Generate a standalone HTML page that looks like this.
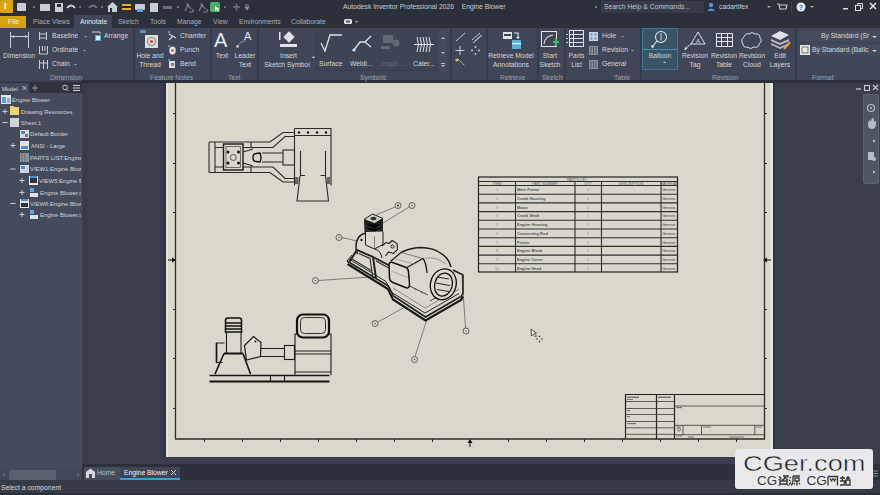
<!DOCTYPE html>
<html><head><meta charset="utf-8">
<style>
*{margin:0;padding:0;box-sizing:border-box}
html,body{width:880px;height:495px;overflow:hidden;background:#3a3e4c;font-family:"Liberation Sans",sans-serif;}
.a{position:absolute}
.t{position:absolute;white-space:nowrap;color:#d3d6dc;font-size:6.8px;line-height:8px}
.c{text-align:center}
svg{position:absolute;overflow:visible}
#title{left:0;top:0;width:880px;height:14px;background:#2b2f3a}
#tabs{left:0;top:14px;width:880px;height:14px;background:#2c303b}
#ribbon{left:0;top:27.5px;width:880px;height:53px;background:#404657}
#browser{left:0;top:82px;width:82px;height:398px;background:#454b5a}
#canvas{left:82px;top:81px;width:798px;height:383px;background:#3a3e4c}
#sheet{left:166px;top:83px;width:607px;height:374px;background:#dad7cc}
#doctabs{left:82px;top:464px;width:798px;height:16px;background:#2c303b}
#status{left:0;top:480px;width:880px;height:15px;background:#363b46;border-bottom:2px solid #2a2e38}
.sep{position:absolute;top:28px;width:1.5px;height:53px;background:#363b49}
.pl{position:absolute;top:73.7px;color:#9aa0ab;font-size:6.8px;line-height:8px;white-space:nowrap}
</style></head><body>
<div id="title" class="a"></div>
<div id="tabs" class="a"></div>
<div id="ribbon" class="a"></div>
<div id="canvas" class="a"></div>
<div id="browser" class="a"></div>
<div id="sheet" class="a"></div>
<div id="doctabs" class="a"></div>
<div id="status" class="a"></div>

<!-- TITLEBAR -->
<div class="a" style="left:0;top:0;width:13px;height:13px;background:#d9a50c;border-radius:1px"></div>
<div class="t" style="left:4px;top:2px;font-size:9px;color:#fff;font-weight:bold">I</div>
<svg style="left:0;top:0" width="880" height="14">
 <g fill="#c9ccd2">
  <rect x="17" y="3" width="9" height="8" rx="1"/>
  <rect x="40" y="4" width="10" height="7"/>
  <rect x="55" y="3" width="8" height="9"/>
  <rect x="108" y="6" width="9" height="6"/><polygon points="107,7 112.5,2 118,7"/>
  <rect x="135" y="4" width="10" height="6" rx="1"/>
  <rect x="150" y="3" width="8" height="9"/>
 </g>
 <g fill="#2a2e38"><rect x="57" y="4" width="4" height="3"/><rect x="110" y="8" width="2" height="4"/></g>
 <path d="M67 8 q4 -5 8 0" stroke="#c9ccd2" stroke-width="2" fill="none"/>
 <path d="M89 8 q4 -5 8 0" stroke="#6a6f7a" stroke-width="2" fill="none"/>
 <rect x="122" y="4" width="9" height="2" fill="#e1b12a"/><rect x="122" y="8" width="9" height="2" fill="#e1b12a"/><rect x="123" y="6" width="7" height="2" fill="#222"/>
 <rect x="137" y="9" width="6" height="3" fill="#5aa0dc"/>
 <rect x="163" y="6" width="9" height="3" fill="#6a6f7a"/>
 <g stroke="#7c818b" stroke-width="1.2" fill="none"><path d="M185 11l3 -6l3 4M186 4h3M193 9v3h-4"/><path d="M199 11l3 -6l3 4M200 4h3M207 9v3h-4"/></g>
 <rect x="210" y="2" width="10" height="10" rx="2" fill="#4cae6a"/><path d="M215 6l0 5l1.5 -1.5l1.5 2l1 -0.5l-1.5 -2l2 0z" fill="#fff"/>
 <g fill="#8b909a"><circle cx="34" cy="7" r="0.9"/><circle cx="80" cy="7" r="0.9"/><circle cx="102" cy="7" r="0.9"/><circle cx="178" cy="7" r="0.9"/><circle cx="225" cy="7" r="0.9"/></g>
 <path d="M233 7h7M236.5 3.5v7" stroke="#6a6f7a" stroke-width="1.5"/>
 <path d="M245 5h4M245 7h4l-2 3z" stroke="#8b909a" stroke-width="1" fill="#8b909a"/>
</svg>
<div class="t" style="left:343px;top:3px;color:#c9ccd3">Autodesk Inventor Professional 2026&nbsp;&nbsp;&nbsp;&nbsp;Engine Blower</div>
<div class="a" style="left:601px;top:1px;width:103px;height:12px;background:#363b47;border-radius:1px"></div>
<div class="t" style="left:604px;top:3px;color:#bfc3ca">Search Help &amp; Commands...</div>
<svg style="left:0;top:0" width="880" height="14">
 <circle cx="596" cy="7" r="0.9" fill="#aaa"/>
 <circle cx="711" cy="5" r="2.2" fill="#5d8fd6"/><path d="M707 11 q4 -5 8 0z" fill="#5d8fd6"/>
 <path d="M767 6h4l-2 2z" fill="#aaa"/>
 <path d="M777 4h2l1 5h6l1 -4h-7" stroke="#c9ccd2" stroke-width="1.2" fill="none"/>
 <rect x="791" y="2" width="1" height="10" fill="#444955"/>
 <circle cx="801" cy="7" r="4.5" fill="#e8eaf0"/><text x="801" y="9.6" text-anchor="middle" font-family="Liberation Sans" font-weight="bold" font-size="7" fill="#2f5fa8">?</text>
 <path d="M810 6h4l-2 2z" fill="#aaa"/>
 <rect x="843" y="8" width="5" height="1.5" fill="#ddd"/>
 <rect x="855.5" y="5.5" width="5" height="5" fill="none" stroke="#ddd" stroke-width="1"/><path d="M857.5 5.5v-2h5v5h-2" fill="none" stroke="#ddd" stroke-width="1"/>
 <path d="M870 3l6 6M876 3l-6 6" stroke="#eee" stroke-width="1.4"/>
</svg>
<div class="t" style="left:719px;top:3px;color:#c9ccd3">cadartifex</div>

<!-- TABS -->
<div class="a" style="left:0;top:16px;width:26px;height:12px;background:#d5a310"></div>
<div class="t" style="left:8px;top:18px;color:#f5efd6">File</div>
<div class="a" style="left:74px;top:15px;width:38px;height:13px;background:#404657"></div>
<div class="t" style="left:33px;top:18px;color:#a9aeb7">Place Views</div>
<div class="t" style="left:80px;top:18px;color:#e6e8ec">Annotate</div>
<div class="t" style="left:118px;top:18px;color:#a9aeb7">Sketch</div>
<div class="t" style="left:150px;top:18px;color:#a9aeb7">Tools</div>
<div class="t" style="left:177px;top:18px;color:#a9aeb7">Manage</div>
<div class="t" style="left:213px;top:18px;color:#a9aeb7">View</div>
<div class="t" style="left:239px;top:18px;color:#a9aeb7">Environments</div>
<div class="t" style="left:291px;top:18px;color:#a9aeb7">Collaborate</div>
<svg style="left:0;top:0" width="880" height="30">
 <rect x="344" y="19" width="8" height="5" rx="1.5" fill="#dfe2e7"/><rect x="346" y="20.5" width="4" height="2" fill="#555"/>
 <path d="M355 21h3l-1.5 2z" fill="#aaa"/>
</svg>
<!-- RIBBON -->
<div class="sep" style="left:133px"></div>
<div class="sep" style="left:210px"></div>
<div class="sep" style="left:257px"></div>
<div class="sep" style="left:450px"></div>
<div class="sep" style="left:486px"></div>
<div class="sep" style="left:537px"></div>
<div class="sep" style="left:564px"></div>
<div class="sep" style="left:640px"></div>
<div class="sep" style="left:795px"></div>
<div class="a" style="left:82px;top:80px;width:798px;height:3px;background:#2b2f3a"></div>
<!-- Dimension panel -->
<svg style="left:0;top:0" width="880" height="82">
 <g stroke="#c8ccd3" stroke-width="1" fill="none">
  <path d="M10.5 32v16M28.5 32v16M11 36.5h17"/>
  <path d="M39.5 32v8M46.5 32v8M40 34h6M40 38h6"/>
  <path d="M39.5 46v8h8v-8M42.5 46v5M45 46v5"/>
  <path d="M39.5 60v9M43.5 60v9M47.5 60v9M40 63h7"/>
 </g>
 <path d="M11 36.5l3 -1.5v3zM28 36.5l-3 -1.5v3z" fill="#c8ccd3"/>
 <path d="M92 32h8v2" stroke="#c8ccd3" fill="none"/><rect x="95" y="35" width="6" height="6" fill="#58a9d6"/><rect x="96" y="36" width="4" height="4" fill="#dfe9ee"/>
 <g fill="#9ca1ab"><path d="M84 36h3l-1.5 1.5z"/><path d="M83 50h3l-1.5 1.5z"/><path d="M74 64h3l-1.5 1.5z"/></g>
</svg>
<div class="t" style="left:3px;top:52px">Dimension</div>
<div class="t" style="left:52px;top:32px">Baseline</div>
<div class="t" style="left:104px;top:32px">Arrange</div>
<div class="t" style="left:52px;top:46px">Ordinate</div>
<div class="t" style="left:52px;top:60px">Chain</div>
<div class="pl" style="left:50px">Dimension</div>
<!-- Feature notes -->
<svg style="left:0;top:0" width="880" height="82">
 <rect x="145" y="35" width="13" height="13" fill="#d9dcd8"/>
 <circle cx="151.5" cy="41.5" r="4" fill="none" stroke="#8a8f96" stroke-width="1.2"/><circle cx="151.5" cy="41.5" r="1.6" fill="#c94a3a"/>
 <rect x="140" y="30" width="6" height="3" fill="#5a8fc4"/>
 <path d="M169 34l7 4M169 40l4 -4" stroke="#d0d3d9" stroke-width="1.2"/>
 <ellipse cx="172.5" cy="50.5" rx="3.2" ry="4" fill="#e6e8ea"/><circle cx="172.5" cy="50.5" r="1.3" fill="#c94a3a"/>
 <path d="M169 61h6v7h-6z" fill="#d9dcd8"/><path d="M171 63h3v3h-3z" fill="#888"/>
 <g fill="#5a8fc4"><rect x="168" y="31" width="2" height="2"/><rect x="168" y="45" width="2" height="2"/><rect x="168" y="59" width="2" height="2"/></g>
</svg>
<div class="t c" style="left:131px;top:52px;width:38px">Hole and</div>
<div class="t c" style="left:131px;top:61.3px;width:38px">Thread</div>
<div class="t" style="left:180px;top:32px">Chamfer</div>
<div class="t" style="left:180px;top:46px">Punch</div>
<div class="t" style="left:180px;top:60px">Bend</div>
<div class="pl" style="left:150px">Feature Notes</div>
<!-- Text -->
<div class="t" style="left:214px;top:30px;font-size:20px;line-height:20px;color:#e4e6ea">A</div>
<div class="t" style="left:244px;top:31px;font-size:11px;line-height:11px;color:#e4e6ea">A</div>
<svg style="left:0;top:0" width="880" height="82">
 <path d="M238 46q3 -5 7 -5" stroke="#d0d3d9" fill="none" stroke-dasharray="1.5 1"/><circle cx="237.5" cy="46.5" r="1.3" fill="#d0d3d9"/>
</svg>
<div class="t c" style="left:208px;top:52px;width:28px">Text</div>
<div class="t c" style="left:231px;top:52px;width:28px">Leader</div>
<div class="t c" style="left:231px;top:61.3px;width:28px">Text</div>
<div class="pl" style="left:228px">Text</div>
<!-- Symbols -->
<div class="a" style="left:316px;top:30px;width:131px;height:41px;background:#3e4454;border:1px solid #383d4b"></div>
<div class="a" style="left:439px;top:30px;width:8px;height:41px;background:#454b5b"></div>
<svg style="left:0;top:0" width="880" height="82">
 <rect x="279" y="32" width="1.5" height="8" fill="#e0e2e6"/>
 <rect x="285" y="33" width="8" height="8" transform="rotate(45 289 37)" fill="#e0e2e6"/>
 <rect x="280" y="44" width="17" height="3" fill="#e0e2e6"/>
 <path d="M321 43l4 8l5 -16h12" stroke="#dfe2e6" stroke-width="1.3" fill="none"/>
 <path d="M354 50l6 -8h5l6 -6M365 42l6 5" stroke="#dfe2e6" stroke-width="1.3" fill="none"/><circle cx="354" cy="50" r="1.6" fill="#dfe2e6"/>
 <g fill="#626874"><rect x="383" y="35" width="10" height="8"/><circle cx="396" cy="43" r="3.5"/><rect x="381" y="46" width="9" height="3"/></g>
 <g stroke="#e0e2e6" stroke-width="1" fill="none"><path d="M417 37q3 7 0 15M420 37q3 7 0 15M423 37q3 7 0 15M426 37q3 7 0 15M429 37q3 7 0 15M414 44.5h20"/></g>
 <g fill="#b8bcc4"><path d="M441 39h4l-2 -2z"/><path d="M441 52h4l-2 2z"/><path d="M441 65h4l-2 2zM441 63h4v1h-4z"/></g>
 <path d="M312 58h3l-1.5 -2z" fill="#ccc"/>
</svg>
<div class="t c" style="left:270px;top:52px;width:37px">Insert</div>
<div class="t c" style="left:262px;top:61.3px;width:50px">Sketch Symbol</div>
<div class="t" style="left:319px;top:59.5px">Surface</div>
<div class="t" style="left:350px;top:59.5px">Weldi...</div>
<div class="t" style="left:381px;top:59.5px;color:#646a75">Impor...</div>
<div class="t" style="left:413px;top:59.5px">Cater...</div>
<div class="pl" style="left:360px">Symbols</div>
<!-- small icons -->
<svg style="left:0;top:0" width="880" height="82">
 <g stroke="#c8ccd3" stroke-width="1" fill="none">
  <path d="M456 41l9 -8"/><path d="M472 40l8 -7M475 41l7 -6M473 43l9 -8"/>
  <path d="M460 46v9M455.5 50.5h9"/>
  <path d="M458 59l7 7" stroke-dasharray="1.5 1"/>
 </g>
 <g fill="#c8ccd3"><circle cx="475.5" cy="47" r="1"/><circle cx="475.5" cy="54" r="1"/><circle cx="472" cy="50.5" r="1"/><circle cx="479" cy="50.5" r="1"/></g>
 <circle cx="457" cy="60" r="1.6" fill="#e8c040"/>
</svg>
<!-- Retrieve -->
<svg style="left:0;top:0" width="880" height="82">
 <rect x="503" y="32" width="9" height="7" fill="#dfe2e6"/><rect x="504" y="34" width="7" height="2" fill="#444"/>
 <path d="M514 33h4v5" stroke="#dfe2e6" stroke-width="1.2" fill="none"/><path d="M516 37l2 2l2 -2" fill="#dfe2e6"/>
 <rect x="512" y="40" width="9" height="9" fill="#5bb0e0"/><rect x="512" y="43" width="9" height="1.2" fill="#dff"/>
</svg>
<div class="t c" style="left:484px;top:52px;width:54px">Retrieve Model</div>
<div class="t c" style="left:484px;top:61.3px;width:54px">Annotations</div>
<div class="pl" style="left:500px">Retrieve</div>
<!-- Sketch -->
<svg style="left:0;top:0" width="880" height="82">
 <rect x="541.5" y="31.5" width="15" height="15" fill="none" stroke="#dfe2e6" stroke-width="1"/>
 <path d="M544 44q1 -8 9 -9" stroke="#dfe2e6" stroke-width="1.2" fill="none"/>
 <path d="M553 42h6M556 39v7" stroke="#3cc060" stroke-width="2.2"/>
</svg>
<div class="t c" style="left:537px;top:52px;width:26px">Start</div>
<div class="t c" style="left:537px;top:61.3px;width:26px">Sketch</div>
<div class="pl" style="left:542px">Sketch</div>
<!-- Table -->
<svg style="left:0;top:0" width="880" height="82">
 <g stroke="#dfe2e6" stroke-width="1" fill="none">
  <rect x="569.5" y="30.5" width="14" height="16"/>
  <path d="M570 34.5h13M570 38.5h13M570 42.5h13M573.5 31v15"/>
 </g>
 <g fill="#c8ccd3"><rect x="566" y="34" width="2" height="1"/><rect x="566" y="38" width="2" height="1"/><rect x="566" y="42" width="2" height="1"/></g>
 <rect x="589" y="32" width="9" height="9" fill="#cdd2d8"/><g fill="#6aa0d0"><circle cx="591.5" cy="34.5" r="1.2"/><circle cx="595.5" cy="34.5" r="1.2"/><circle cx="591.5" cy="38.5" r="1.2"/><circle cx="595.5" cy="38.5" r="1.2"/></g>
 <rect x="589" y="46" width="9" height="9" fill="#8d929b"/><path d="M591 47v7M593.5 47v7M596 47v7" stroke="#4a5060"/>
 <rect x="589" y="60" width="9" height="9" fill="#8d929b"/><path d="M591 61v7M593.5 61v7M596 61v7" stroke="#4a5060"/>
 <g fill="#9ca1ab"><path d="M621 36h3l-1.5 1.5z"/><path d="M631 50h3l-1.5 1.5z"/></g>
</svg>
<div class="t c" style="left:563px;top:52px;width:27px">Parts</div>
<div class="t c" style="left:563px;top:61.3px;width:27px">List</div>
<div class="t" style="left:602px;top:32px">Hole</div>
<div class="t" style="left:602px;top:46px">Revision</div>
<div class="t" style="left:602px;top:60px">General</div>
<div class="pl" style="left:614px">Table</div>
<!-- Revision -->
<div class="a" style="left:642px;top:28px;width:36px;height:42px;background:#385466;border:1px solid #3e7896"></div>
<div class="a" style="left:643px;top:49px;width:34px;height:1px;background:#4a8cb0"></div>
<svg style="left:0;top:0" width="880" height="82">
 <circle cx="661" cy="37" r="5.5" fill="none" stroke="#e4e7ea" stroke-width="1.1"/>
 <path d="M657 41l-4 5" stroke="#e4e7ea" stroke-width="1.1"/><circle cx="652.5" cy="46.5" r="1.3" fill="#e4e7ea"/>
 <path d="M660 34.5l1 -1v7" stroke="#e4e7ea" stroke-width="1"/>
 <path d="M685 49l7 -6" stroke="#dfe2e6" stroke-width="1"/><path d="M684 50l3.5 -1l-2 -2z" fill="#dfe2e6"/>
 <path d="M691 44l7 -12l7 12z" stroke="#dfe2e6" stroke-width="1" fill="none"/><text x="698" y="42.5" text-anchor="middle" font-family="Liberation Sans" font-size="6" fill="#dfe2e6">A</text>
 <g stroke="#dfe2e6" stroke-width="1" fill="none"><rect x="716.5" y="33.5" width="16" height="13"/><path d="M717 37.5h15M717 41.5h15M721.5 34v12M727.5 34v12"/></g>
 <path d="M744 37q1 -4 5 -3q3 -3 6 0q5 -1 5 4q3 3 -1 6q0 4 -5 3q-3 3 -7 0q-4 1 -4 -3q-3 -4 1 -7z" stroke="#dfe2e6" stroke-width="1" fill="none"/>
 <g fill="#e0e2e6"><path d="M771 36l9 -5l9 4l-9 5z"/><path d="M771 39l9 4l9 -4v2l-9 4l-9 -4z" opacity=".8"/><path d="M771 43l9 4l9 -4v2l-9 4l-9 -4z" opacity=".7"/></g>
 <path d="M784 49l6 -7" stroke="#e8a040" stroke-width="2.2"/>
 <path d="M663 63h3l-1.5 -1.5z" fill="#ccc"/>
</svg>
<div class="t c" style="left:642px;top:52px;width:36px">Balloon</div>
<div class="t c" style="left:680px;top:52px;width:30px">Revision</div>
<div class="t c" style="left:680px;top:61.3px;width:30px">Tag</div>
<div class="t c" style="left:709px;top:52px;width:30px">Revision</div>
<div class="t c" style="left:709px;top:61.3px;width:30px">Table</div>
<div class="t c" style="left:737px;top:52px;width:30px">Revision</div>
<div class="t c" style="left:737px;top:61.3px;width:30px">Cloud</div>
<div class="t c" style="left:767px;top:52px;width:26px">Edit</div>
<div class="t c" style="left:767px;top:61.3px;width:26px">Layers</div>
<div class="pl" style="left:712px">Revision</div>
<!-- Format -->
<div class="a" style="left:799px;top:31px;width:81px;height:10px;background:#464c5d"></div>
<div class="a" style="left:799px;top:45px;width:81px;height:10px;background:#464c5d"></div>
<svg style="left:0;top:0" width="880" height="82">
 <rect x="800" y="45" width="10" height="10" fill="#e8e8e8"/><rect x="802" y="47" width="6" height="6" fill="none" stroke="#777"/>
 <path d="M872 36h5l-2.5 2z M872 50h5l-2.5 2z" fill="#c8ccd3"/>
</svg>
<div class="t" style="left:821px;top:32px">By Standard (Sr</div>
<div class="t" style="left:812px;top:46px">By Standard (Ballc</div>
<div class="pl" style="left:812px">Format</div>
<!-- BROWSER -->
<div class="a" style="left:0;top:82px;width:82px;height:11px;background:#2e323d"></div>
<div class="a" style="left:0;top:83px;width:29px;height:10px;background:#434a59"></div>
<div class="t" style="left:2px;top:84.5px;color:#d5d8dd;font-size:5.8px">Model</div>
<svg style="left:0;top:0" width="90" height="495">
 <path d="M22.5 86l4 4M26.5 86l-4 4" stroke="#cfd2d8" stroke-width="0.9"/>
 <path d="M32 88h6M35 85v6" stroke="#8d929b" stroke-width="1"/>
 <circle cx="65" cy="87.5" r="2.3" fill="none" stroke="#c0c4cb" stroke-width="1"/><path d="M66.5 89l2 2" stroke="#c0c4cb"/>
 <path d="M73 85.5h7M73 88h7M73 90.5h7" stroke="#d0d3d8" stroke-width="1"/>
 <rect x="81" y="93" width="1" height="376" fill="#4c5262"/><rect x="82" y="83" width="5" height="381" fill="#363b48"/>
 
 <!-- icons -->
 <rect x="1" y="95" width="10" height="9" fill="#dfe4ea"/><rect x="2" y="97" width="4" height="6" fill="#5a9bd8"/><rect x="7" y="98" width="3" height="5" fill="#9ab"/>
 <rect x="10" y="107" width="9" height="8" fill="#e8d27a"/><rect x="10" y="106" width="4" height="2" fill="#e8d27a"/>
 <rect x="10" y="118" width="9" height="9" fill="#d0d3d6"/>
 <rect x="20" y="130" width="9" height="8" fill="#d5dae0"/><rect x="21" y="131" width="4" height="3" fill="#4a8ed0"/><rect x="25" y="134" width="3" height="3" fill="#c55"/>
 <rect x="20" y="141" width="9" height="9" fill="#dfe2e6"/><rect x="21" y="146" width="7" height="3" fill="#4a8ed0"/>
 <rect x="20" y="153" width="9" height="9" fill="#8f949c"/><path d="M22 153v9M25 153v9" stroke="#666b75"/>
 <rect x="20" y="165" width="9" height="8" fill="#cfd4da"/><rect x="21" y="166" width="4" height="3" fill="#4a8ed0"/>
 <rect x="29" y="176" width="9" height="9" fill="#e6e8ea"/><rect x="30" y="178" width="7" height="5" fill="#333"/><rect x="30" y="176" width="7" height="2" fill="#4a8ed0"/>
 <rect x="30" y="188" width="4" height="4" fill="#5aa8e8"/><rect x="30" y="193" width="4" height="4" fill="#dfe2e6"/><rect x="34" y="193" width="4" height="4" fill="#dfe2e6"/>
 <rect x="20" y="199" width="9" height="9" fill="#dfe2e6"/><rect x="21" y="203" width="7" height="4" fill="#333"/><rect x="21" y="199" width="7" height="2" fill="#4a8ed0"/>
 <rect x="30" y="210" width="4" height="4" fill="#5aa8e8"/><rect x="30" y="215" width="4" height="4" fill="#dfe2e6"/><rect x="34" y="215" width="4" height="4" fill="#dfe2e6"/>
 <g stroke="#c8ccd3" stroke-width="1">
  <path d="M2.5 111.5h5M5 109v5"/><path d="M2.5 122.5h5"/>
  <path d="M10.5 145.5h5M13 143v5"/><path d="M10.5 169h5"/>
  <path d="M19.5 180.5h5M22 178v5"/><path d="M19.5 192.5h5M22 190v5"/>
  <path d="M10.5 203.5h5"/><path d="M19.5 214.5h5M22 212v5"/>
 </g>
</svg>
<div class="a" style="left:0;top:93px;width:81px;height:130px;overflow:hidden">
<div class="t" style="left:12px;top:3px;font-size:5.9px;color:#d2d5da">Engine Blower</div>
<div class="t" style="left:21px;top:15px;font-size:5.9px;color:#d2d5da">Drawing Resources</div>
<div class="t" style="left:21px;top:26px;font-size:5.9px;color:#d2d5da">Sheet:1</div>
<div class="t" style="left:30px;top:37px;font-size:5.9px;color:#d2d5da">Default Border</div>
<div class="t" style="left:31px;top:48.5px;font-size:5.9px;color:#d2d5da">ANSI - Large</div>
<div class="t" style="left:30px;top:60.5px;font-size:5.9px;color:#d2d5da">PARTS LIST:Engine Blower</div>
<div class="t" style="left:30px;top:72px;font-size:5.9px;color:#d2d5da">VIEW1:Engine Blower</div>
<div class="t" style="left:39px;top:83.5px;font-size:5.9px;color:#d2d5da">VIEW5:Engine Blower</div>
<div class="t" style="left:40px;top:95.5px;font-size:5.9px;color:#d2d5da">Engine Blower.iam</div>
<div class="t" style="left:30px;top:106.5px;font-size:5.9px;color:#d2d5da">VIEW6:Engine Blower</div>
<div class="t" style="left:40px;top:117.5px;font-size:5.9px;color:#d2d5da">Engine Blower.iam</div>
</div>
<!-- browser bottom scrollbar -->
<div class="a" style="left:0;top:469px;width:82px;height:11px;background:#414756"></div>
<div class="a" style="left:9px;top:470px;width:47px;height:10px;background:#5a606d"></div>
<svg style="left:0;top:0" width="90" height="495">
 <path d="M5 473l-2 2l2 2M77 473l2 2l-2 2" stroke="#777c86" fill="none"/><path d="M873 471h5M873 473.5h5M873 476h5" stroke="#9a9fa8" stroke-width="0.8"/>
</svg>
<!-- DOC TABS -->
<div class="a" style="left:84px;top:467px;width:36px;height:13px;background:#474d5b"></div>
<div class="a" style="left:120px;top:467px;width:60px;height:13px;background:#3f4554"></div>
<div class="a" style="left:120px;top:478px;width:60px;height:2px;background:#29a8e0"></div>
<svg style="left:0;top:0" width="200" height="495">
 <path d="M86 472l4.5 -3.5l4.5 3.5v6h-9z" fill="#d5d8dd"/><rect x="89" y="474" width="3" height="4" fill="#474d5b"/>
 <path d="M171 470l5 5M176 470l-5 5" stroke="#c9ccd2" stroke-width="1"/>
</svg>
<div class="t" style="left:97px;top:469px;color:#b9bdc4">Home</div>
<div class="t" style="left:124px;top:469px;color:#eceef1">Engine Blower</div>
<!-- STATUS -->
<div class="t" style="left:1px;top:484px;color:#d8dadf">Select a component</div>
<!-- NAV BAR -->
<div class="a" style="left:863px;top:94px;width:16px;height:90px;background:#50566440;border:1px solid #5d6371;background:#4f5563;border-radius:2px"></div>
<svg style="left:0;top:0" width="880" height="495">
 <path d="M856 89h5" stroke="#c8ccd3" stroke-width="1.2"/>
 <rect x="864.5" y="85.5" width="5" height="5" fill="none" stroke="#c8ccd3"/>
 <path d="M873 85l5 5M878 85l-5 5" stroke="#c8ccd3" stroke-width="1.1"/>
 <circle cx="871" cy="108" r="3.5" fill="none" stroke="#b8bcc4" stroke-width="1.2"/><circle cx="871" cy="108" r="1" fill="#b8bcc4"/>
 <path d="M868 126q0 -6 2 -6q1 0 1 3q0 -5 2 -5q1 0 1 4q2 -2 2 0v3q-1 4 -4 4q-3 0 -4 -3z" fill="#b8bcc4"/>
 <circle cx="874" cy="141" r="1.2" fill="#b8bcc4"/>
 <rect x="868" y="152" width="6" height="8" fill="#b8bcc4"/><circle cx="874" cy="159" r="2" fill="#b8bcc4"/>
 <circle cx="874" cy="172" r="1.2" fill="#b8bcc4"/>
</svg>
<!-- SHEET DRAWING -->
<svg style="left:0;top:0" width="880" height="495">
 <rect x="163" y="83" width="3" height="374" fill="#30344a"/><rect x="773" y="83" width="2" height="374" fill="#30344a"/><rect x="166" y="83" width="2" height="374" fill="#e6e4da"/><rect x="770" y="83" width="3" height="374" fill="#e6e5da"/>
 <g stroke="#2e2c28" fill="none" stroke-width="1.3">
  <path d="M175.5 83v356h589v-356"/>
  
 </g>
 <g stroke="#2a2a2a" stroke-width="1">
  <path d="M173 113.5h2M173 163.5h2M173 212.5h2M173 309.5h2M173 358.5h2M173 408.5h2"/>
  <path d="M765 113.5h2M765 163.5h2M765 212.5h2M765 309.5h2M765 358.5h2M765 408.5h2"/>
  <path d="M204.5 439v3M242.5 439v3M280.5 439v3M318.5 439v3M356.5 439v3M394.5 439v3M432.5 439v3M508.5 439v3M546.5 439v3M584.5 439v3M622.5 439v3M660.5 439v3M698.5 439v3M736.5 439v3"/>
 </g>
 <g fill="#111">
  <path d="M168 259.5h4v-2l4 2.5l-4 2.5v-2h-4z"/>
  <path d="M771 259.5h-4v-2l-4 2.5l4 2.5v-2h4z"/>
  <path d="M469.5 447v-4h-2l2.5 -4l2.5 4h-2v4z"/>
 </g>
</svg>
<!-- top view -->
<svg style="left:0;top:0" width="880" height="495">
 <g stroke="#2a2a2a" fill="none" stroke-width="1.1">
  <path d="M209 142h61l13 -9.5h11.5"/>
  <path d="M209 172.5h61l13 9.5h11.5"/>
  <path d="M209 142v30.5"/>
  <path d="M215 147.5h8.5M243 147.5h30l12 -11h9.5"/>
  <path d="M215 167h8.5M243 167h30l12 11.5h9.5"/>
  <path d="M215 142v30.5M251 142v5.5M251 167v5.5"/>
  <path d="M262 153h21M262 162h21"/>
  <rect x="283" y="150" width="11.5" height="15"/>
  <path d="M243 152l10 -3M243 163l10 3"/>
  <path d="M294.5 128.5h36.5v57M294.5 128.5v57M294.5 135.5h36.5"/>
  <path d="M300.5 151v24.5h4.5M325.5 151v24.5h-5"/>
  <path d="M300 176l-3 25h31.5l-3 -25"/>
 </g>
 <g fill="#666"><rect x="295" y="177" width="3.5" height="7"/><rect x="327" y="177" width="3.5" height="7"/></g>
 <rect x="223.5" y="144" width="19.5" height="26" stroke="#1a1a1a" stroke-width="1.4" fill="none"/>
 <rect x="226" y="146.5" width="14.5" height="21" stroke="#555" stroke-width="0.8" fill="none"/>
 <g fill="#111"><circle cx="228" cy="152" r="1.5"/><circle cx="238.5" cy="152" r="1.5"/><circle cx="228" cy="163" r="1.5"/><circle cx="238.5" cy="163" r="1.5"/>
  <circle cx="299" cy="132.5" r="1.2"/><circle cx="308" cy="132.5" r="1.2"/><circle cx="317" cy="132.5" r="1.2"/><circle cx="326" cy="132.5" r="1.2"/></g>
 <circle cx="233.3" cy="157.5" r="3" stroke="#444" fill="none" stroke-width="0.9"/>
 <path d="M256 153.5q-3 0 -3 4q0 4 3 4l4 0.5q2 -4 0 -9z" stroke="#111" fill="none" stroke-width="1.4"/>
</svg>
<!-- side view -->
<svg style="left:0;top:0" width="880" height="495">
 <g stroke="#1c1c1c" fill="none" stroke-width="1.1">
  <path d="M270.5 375.5v6M284.5 375.5v6"/>
  <path d="M226.5 333v20M241 333v20"/>
  <path d="M260.5 348.5h24M260.5 356.5h24"/>
  <rect x="284.5" y="345.5" width="10" height="14"/>
  <path d="M295 375V334h36v41"/>
 </g>
 <path d="M224.5 343h-8v19.5h6" stroke="#1c1c1c" stroke-width="1.1" fill="none"/>
 <path d="M216.5 343v19.5" stroke="#111" stroke-width="1.6"/>
 <path d="M209.5 375.5h120" stroke="#151515" stroke-width="1.6"/>
 <path d="M209.5 381.5h120" stroke="#111" stroke-width="1.8"/>
 <path d="M224 353.5l-9 20.5M243 353.5l7.5 20.5" stroke="#111" stroke-width="1.6" fill="none"/>
 <path d="M224 353.5h19" stroke="#111" stroke-width="2"/>
 <path d="M244.5 345.5l9 -9l7.5 6l-0.5 14l-14 3.5z" stroke="#1c1c1c" stroke-width="1.2" fill="#dcd9ce"/>
 <path d="M225.5 333v-12.5q0 -2.5 2.5 -2.5h11q2.5 0 2.5 2.5v12.5" fill="#dbd8cd" stroke="#111" stroke-width="1.5"/>
 <g stroke="#111" stroke-width="1.3"><path d="M226 323h15M226 326h15M226 329h15M226 332h15"/></g>
 <path d="M295 351h36M295 354h36M295 372h36" stroke="#222" stroke-width="1.2"/>
 <rect x="297" y="314.5" width="32" height="23" rx="6" stroke="#111" stroke-width="2.2" fill="#dbd8cd"/>
 <rect x="300.5" y="317.5" width="25" height="16" rx="4" stroke="#333" stroke-width="1" fill="none"/>
 <circle cx="255.5" cy="341.5" r="0.9" fill="#111"/>
</svg>
<!-- iso view -->
<svg style="left:0;top:0" width="880" height="495">
 <g stroke="#555" stroke-width="0.7" fill="none">
  <path d="M376 215L395 207M383 223L409 207M342 237.5L357 241M318.5 280.5L370 277M378 322L405 307M415 356.5L427 319M465.5 328L462 276"/>
 </g>
 <g stroke="#3a3a3a" stroke-width="0.75" fill="#dcd9ce">
  <circle cx="398" cy="205.5" r="3"/><circle cx="412" cy="205.5" r="3"/><circle cx="339" cy="237.5" r="3"/>
  <circle cx="315.5" cy="280.5" r="3"/><circle cx="375" cy="323.5" r="3"/><circle cx="414.5" cy="359.5" r="3"/><circle cx="466" cy="331" r="3"/>
 </g>
 <g fill="#444"><circle cx="398" cy="205.5" r="1.1"/><circle cx="412" cy="205.5" r="0.7"/><circle cx="339" cy="237.5" r="0.7"/><circle cx="315.5" cy="280.5" r="0.7"/><circle cx="375" cy="323.5" r="0.7"/><circle cx="414.5" cy="359.5" r="0.7"/><circle cx="466" cy="331" r="0.7"/></g>
 <!-- base plate -->
 <path d="M347 261L388.5 286L393.5 296L425.5 317L461 296.5L463 293L463 275L453 270" fill="none" stroke="#1e1e1e" stroke-width="1.5"/>
 <path d="M347.5 264L388 289L393 299.5L425.5 320.5L461 300L463 296.5" fill="none" stroke="#1a1a1a" stroke-width="2.2"/>
 <path d="M349 259L386 281.5L391 292L425 313L459 293.5" fill="none" stroke="#2a2a2a" stroke-width="1"/>
 <path d="M347 261L352 255" stroke="#222" stroke-width="1"/>
 <path d="M393 288L425 308L459 289" fill="none" stroke="#666" stroke-width="0.7"/>
 <!-- frame / supports -->
 <g stroke="#1c1c1c" stroke-width="1.9" fill="none">
  <path d="M349.5 261.5L357 250L373 257L376 278"/>
  <path d="M373 257L399 270.5"/>
 </g>
 <g stroke="#2a2a2a" stroke-width="1.1" fill="none">
  <path d="M359 253.5L370 258.5L373 279M376 261L398 273"/>
  <path d="M352 259L372 271"/>
 </g>
 <!-- engine -->
 <path d="M364 219.5L372.5 214L383 218.5L383 232L374 237L364.5 232z" fill="#1f1f1f"/>
 <path d="M364 219.5L372.5 214L383 218.5L374.5 223.5z" fill="#d6d3c8" stroke="#111" stroke-width="0.9"/>
 <ellipse cx="373.5" cy="218.5" rx="3" ry="1.8" fill="#333"/>
 <g stroke="#666" stroke-width="0.5"><path d="M364.5 224.5l9.5 4.5l9 -4.5M364.5 228l9.5 4.5l9 -4.5"/></g>
 <path d="M365.5 232v13l9 4l8.5 -4.5v-13" fill="#dcd9ce" stroke="#1c1c1c" stroke-width="1"/>
 <path d="M374.5 236.5v12.5" stroke="#555" stroke-width="0.7"/>
 <path d="M366 233Q356 235 356 247Q356 252 358 254" fill="none" stroke="#1c1c1c" stroke-width="1.4"/>
 <circle cx="361.5" cy="240" r="1.2" fill="#222"/>
 <path d="M382 246l4 -3.5l3 1l3 -3l5 3l0.5 6l-4 4l-5 -1.5l-3 4" fill="#dcd9ce" stroke="#1c1c1c" stroke-width="1.1"/>
 <circle cx="392.5" cy="246.5" r="1.6" fill="none" stroke="#222" stroke-width="1"/>
 <path d="M375 249Q381 251 382 258" stroke="#222" stroke-width="1" fill="none"/>
 <!-- blower housing -->
 <path d="M401 252.5Q410 248 420 247.5Q434 247.5 442 254Q449 259 451 267" fill="none" stroke="#1c1c1c" stroke-width="1.5"/>
 <path d="M401 252.5L423 258.5" fill="none" stroke="#555" stroke-width="0.7"/>
 <path d="M425 258.5Q436 256 446 264" fill="none" stroke="#666" stroke-width="0.6"/>
 <path d="M389 265Q389 261.5 392.5 262.5L405 267Q408.5 268.5 408.5 272L409.5 284.5Q409.5 289 405.5 287.5L393 282.5Q389.5 281 389.5 277.5z" fill="#dcd9ce" stroke="#111" stroke-width="1.5"/>
 <path d="M390.5 261.5L401 252.5M406 268L423 258.5Q426 262 427 273" fill="none" stroke="#1c1c1c" stroke-width="1.3"/>
 <path d="M391 271l17 6.5M394 258.5l20 5.5" stroke="#888" stroke-width="0.6"/>
 <path d="M409.5 286L428 295M415 289l1.2 0.6M421 292l1.2 0.6" stroke="#333" stroke-width="0.9"/>
 <path d="M430 301L456 286.5M456.8 271.5L462.7 274.8V279" fill="none" stroke="#333" stroke-width="0.9"/>
 <ellipse cx="443.3" cy="284.3" rx="12.8" ry="15.6" transform="rotate(15 443.3 284.3)" fill="#dcd9ce" stroke="#111" stroke-width="1.3"/>
 <ellipse cx="443.5" cy="284.6" rx="8.8" ry="11.6" transform="rotate(15 443.5 284.6)" fill="#dcd9ce" stroke="#111" stroke-width="1.3"/>
 <g stroke="#2a2a2a" stroke-width="1.1"><path d="M437 277l12 2M436 283l14 2.5M437 289.5l12 2"/></g>
</svg>
<!-- parts list -->
<svg style="left:0;top:0" width="880" height="495">
 <rect x="478.5" y="177" width="199" height="95" fill="none" stroke="#222" stroke-width="1.2"/>
 <g stroke="#2e2e2e" stroke-width="1.1">
  <path d="M478.5 181.5h199M478.5 185.5h199"/>
  <path d="M478.5 194.2h199M478.5 202.9h199M478.5 211.6h199M478.5 220.3h199M478.5 229.0h199M478.5 237.7h199M478.5 246.4h199M478.5 255.1h199M478.5 263.8h199"/>
  <path d="M515.5 181.5v90.5M575 181.5v90.5M601.5 181.5v90.5M661 181.5v90.5"/>
 </g>
 <g font-family="Liberation Sans" font-size="3.6">
  <text x="577" y="180.5" text-anchor="middle" fill="#555">PARTS LIST</text>
  <text x="497" y="184.6" text-anchor="middle" fill="#555">ITEM</text>
  <text x="545" y="184.6" text-anchor="middle" fill="#555">PART NUMBER</text>
  <text x="588" y="184.6" text-anchor="middle" fill="#555">QTY</text>
  <text x="631" y="184.6" text-anchor="middle" fill="#555">DESCRIPTION</text>
  <text x="669" y="184.6" text-anchor="middle" fill="#555">MATERIAL</text>
 </g>
 <g font-family="Liberation Sans" font-size="4">
  <text x="497" y="191.3" text-anchor="middle" fill="#8a877f">1</text><text x="517" y="191.3" fill="#3a3a3a" font-weight="bold" opacity="0.85">Main Frame</text><text x="588" y="191.3" text-anchor="middle" fill="#8a877f">1</text><text x="662" y="191.3" fill="#3a3a3a">Generic</text><text x="497" y="200.0" text-anchor="middle" fill="#8a877f">2</text><text x="517" y="200.0" fill="#3a3a3a" font-weight="bold" opacity="0.85">Crank Housing</text><text x="588" y="200.0" text-anchor="middle" fill="#8a877f">1</text><text x="662" y="200.0" fill="#3a3a3a">Generic</text><text x="497" y="208.8" text-anchor="middle" fill="#8a877f">3</text><text x="517" y="208.8" fill="#3a3a3a" font-weight="bold" opacity="0.85">Motor</text><text x="588" y="208.8" text-anchor="middle" fill="#8a877f">1</text><text x="662" y="208.8" fill="#3a3a3a">Generic</text><text x="497" y="217.4" text-anchor="middle" fill="#8a877f">4</text><text x="517" y="217.4" fill="#3a3a3a" font-weight="bold" opacity="0.85">Crank Shaft</text><text x="588" y="217.4" text-anchor="middle" fill="#8a877f">1</text><text x="662" y="217.4" fill="#3a3a3a">Generic</text><text x="497" y="226.2" text-anchor="middle" fill="#8a877f">5</text><text x="517" y="226.2" fill="#3a3a3a" font-weight="bold" opacity="0.85">Engine Housing</text><text x="588" y="226.2" text-anchor="middle" fill="#8a877f">1</text><text x="662" y="226.2" fill="#3a3a3a">Generic</text><text x="497" y="234.8" text-anchor="middle" fill="#8a877f">6</text><text x="517" y="234.8" fill="#3a3a3a" font-weight="bold" opacity="0.85">Connecting Rod</text><text x="588" y="234.8" text-anchor="middle" fill="#8a877f">1</text><text x="662" y="234.8" fill="#3a3a3a">Generic</text><text x="497" y="243.5" text-anchor="middle" fill="#8a877f">7</text><text x="517" y="243.5" fill="#3a3a3a" font-weight="bold" opacity="0.85">Piston</text><text x="588" y="243.5" text-anchor="middle" fill="#8a877f">1</text><text x="662" y="243.5" fill="#3a3a3a">Generic</text><text x="497" y="252.2" text-anchor="middle" fill="#8a877f">8</text><text x="517" y="252.2" fill="#3a3a3a" font-weight="bold" opacity="0.85">Engine Block</text><text x="588" y="252.2" text-anchor="middle" fill="#8a877f">1</text><text x="662" y="252.2" fill="#3a3a3a">Generic</text><text x="497" y="260.9" text-anchor="middle" fill="#8a877f">9</text><text x="517" y="260.9" fill="#3a3a3a" font-weight="bold" opacity="0.85">Engine Cover</text><text x="588" y="260.9" text-anchor="middle" fill="#8a877f">1</text><text x="662" y="260.9" fill="#3a3a3a">Generic</text><text x="497" y="269.7" text-anchor="middle" fill="#8a877f">10</text><text x="517" y="269.7" fill="#3a3a3a" font-weight="bold" opacity="0.85">Engine Head</text><text x="588" y="269.7" text-anchor="middle" fill="#8a877f">1</text><text x="662" y="269.7" fill="#3a3a3a">Generic</text>
 </g>
</svg>
<!-- title block -->
<svg style="left:0;top:0" width="880" height="495">
 <g stroke="#222" fill="none" stroke-width="1.2">
  <path d="M625.5 439v-44.5h139"/>
  <path d="M656.5 394.5v44.5M674.5 394.5v44.5"/>
 </g>
 <g stroke="#3a3a3a" stroke-width="0.8">
  <path d="M625.5 401.5h49M625.5 408.5h49M625.5 414.5h49M625.5 421.5h49M625.5 427.8h49M625.5 434.3h49"/>
  <path d="M674.5 406h90M674.5 425.3h90M674.5 434.7h90M683 425.3v9.4M701.5 425.3v9.4M754.8 425.3v9.4"/>
 </g>
 <g fill="#777"><rect x="627" y="396.5" width="12" height="1.5"/><rect x="627" y="399" width="6" height="1"/><rect x="658" y="396.5" width="13" height="1.5"/><rect x="676" y="407" width="6" height="1.2"/><rect x="627" y="410" width="3" height="1.2"/><rect x="627" y="416" width="3" height="1.2"/><rect x="627" y="423" width="9" height="1.2"/><rect x="676" y="426.5" width="5" height="1"/><rect x="703" y="426.5" width="8" height="1"/><rect x="756" y="426.5" width="6" height="1"/><rect x="676" y="435.5" width="6" height="1"/><rect x="688" y="436.5" width="6" height="1"/><rect x="729" y="436.5" width="15" height="1"/></g>
 <circle cx="679" cy="429.5" r="1.5" fill="none" stroke="#444" stroke-width="0.7"/>
</svg>
<!-- cursor -->
<svg style="left:0;top:0" width="880" height="495">
 <path d="M531 329l0.5 7l1.5 -1.5l2.5 2.5l1 -1l-2.5 -2.5l2.5 -0.5z" fill="#eee" stroke="#333" stroke-width="0.8"/>
 <g fill="#333"><circle cx="539.5" cy="336.5" r="0.8"/><circle cx="539.5" cy="341.5" r="0.8"/><circle cx="537" cy="339" r="0.8"/><circle cx="542" cy="339" r="0.8"/></g>
</svg>
<!-- watermark -->
<div class="a" style="left:735px;top:449px;width:138px;height:40px;background:#e9e9eb;border-radius:3px"></div>
<svg style="left:0;top:0" width="880" height="495">
 <text x="743" y="470.5" font-family="Liberation Sans" font-size="22" fill="#1a1a1a" stroke="#e9e9eb" stroke-width="0.45" textLength="122.5" lengthAdjust="spacingAndGlyphs">CGer.com</text>
 <text x="757" y="485" font-family="Liberation Sans" font-size="13" fill="#383838" textLength="20" lengthAdjust="spacingAndGlyphs">CG</text>
 <text x="806.5" y="485" font-family="Liberation Sans" font-size="13" fill="#383838" textLength="20.5" lengthAdjust="spacingAndGlyphs">CG</text>
 <g stroke="#383838" stroke-width="1.35" fill="none">
  <path d="M779 476.5l2 1.5M778.5 480l3 -1.5M783 476h5l-1 2M785 476.5q0 3 -3 3.5M785 477.5q1 2 3 2.5M780 481h7v3h-7zM780.5 484.5l-2 1M786.5 484.5l2 1"/>
  <path d="M789.5 477l1.5 1M789 480l1.5 1M789 485l2 -3M793 476h7M793 476v5q0 3 -2 4.5M795 478h4v3h-4zM797 481v4.5M795 483l-1 1.5M799 483l1 1.5"/>
  <path d="M828 476.5h9.5v9M828 476.5v9M830 478.5l2 3M833 478.5l-2 3M833 478.5l2 3M836 478.5l-2 3"/>
  <path d="M840 478h5M842.5 476v4.5M840 481h5l-1 4h-4M846 478h4M848 476v3.5M846 480h4v5h-4z"/>
 </g>
</svg>
